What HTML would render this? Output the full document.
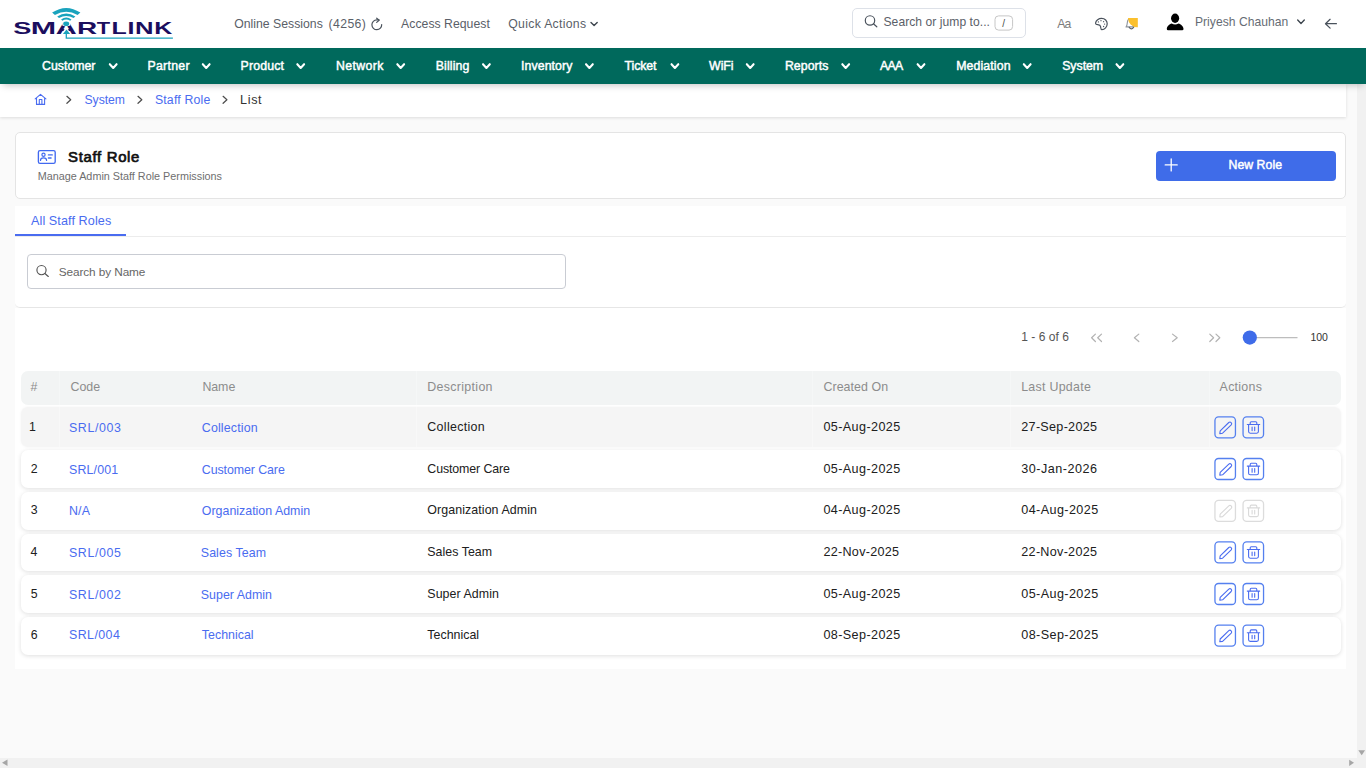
<!DOCTYPE html>
<html lang="en">
<head>
<meta charset="utf-8">
<title>Staff Role - List</title>
<style>
*{box-sizing:border-box;margin:0;padding:0}
html,body{width:1366px;height:768px;overflow:hidden;background:#fafafa;font-family:"Liberation Sans",Arial,sans-serif;color:#222}
body{position:relative}
.abs{position:absolute}
svg{overflow:visible}
.t{position:absolute;white-space:nowrap;line-height:1}
.sb{-webkit-text-stroke:.45px currentColor}
.sb2{-webkit-text-stroke:.7px currentColor}
#hdr{position:absolute;left:0;top:0;width:1366px;height:48px;background:#fff}
#nav{position:absolute;left:0;top:48px;width:1366px;height:36px;background:#00695c;box-shadow:0 4px 7px -3px rgba(0,0,0,.25)}
#bc{position:absolute;left:0;top:84px;width:1346px;height:33px;background:#fff;box-shadow:0 1px 3px rgba(0,0,0,.12)}
#vsb{position:absolute;left:1357px;top:84px;width:9px;height:684px;background:#f1f1f1}
#hsb{position:absolute;left:0;top:758px;width:1366px;height:10px;background:#f1f1f1}
#card{position:absolute;left:15px;top:132px;width:1331px;height:67px;background:#fff;border:1px solid #e4e4e4;border-radius:5px}
#btn{position:absolute;left:1156px;top:151px;width:180px;height:30px;background:#3f6ce9;border-radius:4px}
#tabs{position:absolute;left:15px;top:206px;width:1331px;height:31px;background:#fff;border-bottom:1px solid #ececec}
#tabline{position:absolute;left:15px;top:234px;width:111.4px;height:2px;background:#4a6cf0}
#srch{position:absolute;left:15px;top:237px;width:1331px;height:71px;background:#fff;border-bottom:1px solid #e6e6e6;border-radius:0 0 5px 5px}
#list{position:absolute;left:15px;top:308px;width:1331px;height:361px;background:#fff}
#inp{position:absolute;left:27px;top:254px;width:539px;height:35px;border:1px solid #c9ccd3;border-radius:4px;background:#fff}
#sbox{position:absolute;left:852px;top:8px;width:174px;height:30px;border:1px solid #dde1e8;border-radius:5px;background:#fff}
#th{position:absolute;left:21px;top:370.5px;width:1320px;height:34px;background:#f2f4f4;border-radius:7px}
.row{position:absolute;left:21px;width:1320px;background:#fff;border-radius:7px;box-shadow:0 1px 4px rgba(0,0,0,.13)}
.row.hov{background:#f5f5f5;box-shadow:0 0 3px rgba(0,0,0,.05)}
.seam{position:absolute;top:371px;width:1px;height:76px;background:rgba(255,255,255,.28)}
</style>
</head>
<body>
<div id="hdr"></div>
<svg id="logo" width="180" height="48" viewBox="0 0 180 48" style="position:absolute;left:0;top:0">
<text y="33.9" font-family="Liberation Sans, Arial, sans-serif" font-weight="700" font-size="16.3" fill="#1b0e5e"><tspan x="13.31" textLength="18.15" lengthAdjust="spacingAndGlyphs">S</tspan><tspan x="30.66" textLength="25.38" lengthAdjust="spacingAndGlyphs">M</tspan><tspan x="55.67" textLength="20.98" lengthAdjust="spacingAndGlyphs">A</tspan><tspan x="76.93" textLength="20.16" lengthAdjust="spacingAndGlyphs">R</tspan><tspan x="96.66" textLength="13.38" lengthAdjust="spacingAndGlyphs">T</tspan><tspan x="111.43" textLength="15.25" lengthAdjust="spacingAndGlyphs">L</tspan><tspan x="127.52" textLength="6.95" lengthAdjust="spacingAndGlyphs">I</tspan><tspan x="135.08" textLength="18.54" lengthAdjust="spacingAndGlyphs">N</tspan><tspan x="154.23" textLength="18.02" lengthAdjust="spacingAndGlyphs">K</tspan></text>
<path d="M61.5 33.95 L66.2 26.6 L70.9 33.95 Z" fill="#fff"/>
<path d="M62.3 22 h8 v3.6 l-4.1 1.2 l-3.9 -1.2 Z" fill="#fff"/>
<ellipse cx="66.2" cy="23.7" rx="3" ry="2.3" fill="#1aa3bd"/>
<path d="M62.9 33.9 L66.5 29.4 L70.2 33.9 Z" fill="#1aa3bd"/>
<path d="M66.3 33.5 V38.2 H172.9" fill="none" stroke="#1aa3bd" stroke-width="1.3"/>
<path d="M52.1 12.6 Q66.2 3.2 80.4 12.6 L77.6 15 Q66.2 8.6 54.9 15 Z" fill="#1aa3bd"/>
<path d="M57.2 16.4 Q66.2 10.4 75.4 16.4 L73.6 18.1 Q66.2 13.8 59 18.1 Z" fill="#1aa3bd"/>
<path d="M61.1 19.6 Q66.2 15.6 71.5 19.6 L70.2 20.8 Q66.2 18.2 62.4 20.8 Z" fill="#1aa3bd"/>
</svg>
<svg class="abs" style="left:370px;top:17px" width="14" height="14" viewBox="370 17 14 14"><path d="M381.7 24.6 A4.9 4.9 0 1 1 376.85 19.9 H379" fill="none" stroke="#4a525c" stroke-width="1.2" stroke-linecap="round"/><path d="M376.7 18.2 L379.1 20.2 L376.7 22.4" fill="none" stroke="#4a525c" stroke-width="1.2" stroke-linecap="round" stroke-linejoin="round"/></svg>
<svg class="abs" style="left:588px;top:19px" width="14" height="11" viewBox="588 19 14 11"><path d="M591.00 22.40 L594.10 25.50 L597.20 22.40" fill="none" stroke="#3e464f" stroke-width="1.4" stroke-linecap="round" stroke-linejoin="round"/></svg>
<div id="sbox"></div>
<svg class="abs" style="left:992px;top:13px" width="24" height="20" viewBox="992 13 24 20"><rect x="995" y="15.9" width="17.6" height="14.2" rx="3.6" fill="#fff" stroke="#c6c6c6" stroke-width="1"/></svg>
<svg class="abs" style="left:862px;top:13px" width="18" height="18" viewBox="862 13 18 18"><circle cx="870" cy="20.45" r="4.7" fill="none" stroke="#4a525c" stroke-width="1.2"/><path d="M873.4 23.8 L876.8 26.8" stroke="#4a525c" stroke-width="1.2" stroke-linecap="round"/></svg>
<svg class="abs" style="left:1093px;top:15px" width="18" height="18" viewBox="1093 14.7 18 18"><path d="M1101.6 18.1 C1105 18.1 1107.2 20.6 1107.2 23.4 C1107.2 26.6 1104.6 29.4 1102 29.4 C1100.6 29.4 1100.8 27.6 1100.6 26.4 C1100.4 25 1099.2 24.6 1097.8 24.4 C1096.4 24.2 1095.4 23.8 1095.6 22.6 C1096 20.2 1098.6 18.1 1101.6 18.1 Z" fill="none" stroke="#4a525c" stroke-width="1.2" stroke-linejoin="round"/><g fill="#4a525c"><circle cx="1098.4" cy="21.6" r=".65"/><circle cx="1101" cy="20.4" r=".65"/><circle cx="1103.6" cy="21.4" r=".65"/><circle cx="1104.6" cy="23.8" r=".65"/><circle cx="1103.6" cy="26.2" r=".65"/></g></svg>
<svg class="abs" style="left:1123px;top:15px" width="18" height="18" viewBox="1123 15 18 18"><path d="M1126 26.9 C1127.4 26 1127.2 22.4 1127.6 20.8 C1128 19.2 1129 18.6 1130 18.6 C1132 18.8 1132.4 20.4 1132.6 22 C1132.8 24 1132.8 26 1133.8 26.9 Z" fill="none" stroke="#8d949c" stroke-width="1.1" stroke-linejoin="round"/><path d="M1129.2 27.4 Q1131.4 30.2 1133.6 27.4" fill="none" stroke="#5a626b" stroke-width="1.2" stroke-linecap="round"/><path d="M1128 17.9 H1137.8 V27.3 H1137.2 A9.6 9.6 0 0 1 1128 17.9 Z" fill="#fbc02d"/></svg>
<svg class="abs" style="left:1165px;top:12px" width="20" height="20" viewBox="1165 12 20 20"><ellipse cx="1175.1" cy="18.2" rx="4.05" ry="4.7" fill="#000"/><path d="M1166.8 29 C1166.8 26 1169.5 24.2 1171.7 23.5 A6.4 6.4 0 0 0 1178.5 23.5 C1180.7 24.2 1183.5 26 1183.5 29 Q1183.5 30.3 1182.2 30.3 H1168.1 Q1166.8 30.3 1166.8 29 Z" fill="#000"/></svg>
<svg class="abs" style="left:1294px;top:17px" width="14" height="11" viewBox="1294 17 14 11"><path d="M1297.70 20.10 L1301.00 23.40 L1304.30 20.10" fill="none" stroke="#3e464f" stroke-width="1.4" stroke-linecap="round" stroke-linejoin="round"/></svg>
<svg class="abs" style="left:1322px;top:16px" width="18" height="16" viewBox="1322 16 18 16"><path d="M1336.4 23.7 H1325.6 M1330.1 19.3 L1325.5 23.7 L1330.1 28.1" fill="none" stroke="#4a525c" stroke-width="1.25" stroke-linecap="round" stroke-linejoin="round"/></svg>
<div id="bc"></div>
<div id="vsb"></div><div id="hsb"></div>
<svg class="abs" style="left:0;top:748px" width="1366" height="20" viewBox="0 748 1366 20"><g fill="#a6a6a6"><path d="M2 762.8 L7.5 759.5 V766.1 Z"/><path d="M1354 762.8 L1349.2 759.7 V765.9 Z"/><path d="M1358.3 750.3 H1365.1 L1361.7 755.3 Z"/></g></svg>
<div id="nav"></div>
<svg class="abs" style="left:106px;top:61px" width="14" height="11" viewBox="106 61 14 11"><path d="M109.80 64.20 L113.20 68.00 L116.60 64.20" fill="none" stroke="#fff" stroke-width="2.05" stroke-linecap="round" stroke-linejoin="round"/></svg>
<svg class="abs" style="left:199px;top:61px" width="14" height="11" viewBox="199 61 14 11"><path d="M202.80 64.20 L206.20 68.00 L209.60 64.20" fill="none" stroke="#fff" stroke-width="2.05" stroke-linecap="round" stroke-linejoin="round"/></svg>
<svg class="abs" style="left:294px;top:61px" width="14" height="11" viewBox="294 61 14 11"><path d="M297.30 64.20 L300.70 68.00 L304.10 64.20" fill="none" stroke="#fff" stroke-width="2.05" stroke-linecap="round" stroke-linejoin="round"/></svg>
<svg class="abs" style="left:394px;top:61px" width="14" height="11" viewBox="394 61 14 11"><path d="M397.30 64.20 L400.70 68.00 L404.10 64.20" fill="none" stroke="#fff" stroke-width="2.05" stroke-linecap="round" stroke-linejoin="round"/></svg>
<svg class="abs" style="left:480px;top:61px" width="14" height="11" viewBox="480 61 14 11"><path d="M483.00 64.20 L486.40 68.00 L489.80 64.20" fill="none" stroke="#fff" stroke-width="2.05" stroke-linecap="round" stroke-linejoin="round"/></svg>
<svg class="abs" style="left:583px;top:61px" width="14" height="11" viewBox="583 61 14 11"><path d="M586.00 64.20 L589.40 68.00 L592.80 64.20" fill="none" stroke="#fff" stroke-width="2.05" stroke-linecap="round" stroke-linejoin="round"/></svg>
<svg class="abs" style="left:668px;top:61px" width="14" height="11" viewBox="668 61 14 11"><path d="M671.50 64.20 L674.90 68.00 L678.30 64.20" fill="none" stroke="#fff" stroke-width="2.05" stroke-linecap="round" stroke-linejoin="round"/></svg>
<svg class="abs" style="left:743px;top:61px" width="14" height="11" viewBox="743 61 14 11"><path d="M746.80 64.20 L750.20 68.00 L753.60 64.20" fill="none" stroke="#fff" stroke-width="2.05" stroke-linecap="round" stroke-linejoin="round"/></svg>
<svg class="abs" style="left:839px;top:61px" width="14" height="11" viewBox="839 61 14 11"><path d="M842.30 64.20 L845.70 68.00 L849.10 64.20" fill="none" stroke="#fff" stroke-width="2.05" stroke-linecap="round" stroke-linejoin="round"/></svg>
<svg class="abs" style="left:914px;top:61px" width="14" height="11" viewBox="914 61 14 11"><path d="M917.60 64.20 L921.00 68.00 L924.40 64.20" fill="none" stroke="#fff" stroke-width="2.05" stroke-linecap="round" stroke-linejoin="round"/></svg>
<svg class="abs" style="left:1020px;top:61px" width="14" height="11" viewBox="1020 61 14 11"><path d="M1023.80 64.20 L1027.20 68.00 L1030.60 64.20" fill="none" stroke="#fff" stroke-width="2.05" stroke-linecap="round" stroke-linejoin="round"/></svg>
<svg class="abs" style="left:1113px;top:61px" width="14" height="11" viewBox="1113 61 14 11"><path d="M1116.50 64.20 L1119.90 68.00 L1123.30 64.20" fill="none" stroke="#fff" stroke-width="2.05" stroke-linecap="round" stroke-linejoin="round"/></svg>
<svg class="abs" style="left:33px;top:92px" width="16" height="15" viewBox="33 92 16 15"><path d="M35.2 98.8 L40.5 94.3 L45.9 98.8 M36.5 97.9 V104.4 H44.6 V97.9 M39.3 104.4 V99.5 H41.9 V104.4" fill="none" stroke="#4a6cf0" stroke-width="1.1" stroke-linecap="round" stroke-linejoin="round"/></svg>
<svg class="abs" style="left:60px;top:92px" width="180" height="16" viewBox="60 92 180 16"><g fill="none" stroke="#4d4d4d" stroke-width="1.25" stroke-linecap="round" stroke-linejoin="round"><path d="M66.9 96.3 L70.7 99.8 L66.9 103.3"/><path d="M138 96.3 L141.8 99.8 L138 103.3"/><path d="M223.1 96.3 L226.9 99.8 L223.1 103.3"/></g></svg>
<div id="card"></div><div id="btn"></div>
<svg class="abs" style="left:1164px;top:158px" width="14" height="14" viewBox="1164 158 14 14"><path d="M1165.2 164.9 H1177.2 M1171.2 158.9 V170.9" stroke="#fff" stroke-width="1.3" stroke-linecap="round"/></svg>
<svg class="abs" style="left:36px;top:148px" width="22" height="18" viewBox="36 148 22 18"><rect x="38.4" y="150.6" width="16.8" height="12.7" rx="1.6" fill="none" stroke="#4169f0" stroke-width="1.35"/><circle cx="43.5" cy="154.8" r="1.6" fill="none" stroke="#4169f0" stroke-width="1.2"/><path d="M40.5 160.4 C40.5 158.4 41.6 157.9 43.5 157.9 C45.4 157.9 46.6 158.4 46.6 160.4" fill="none" stroke="#4169f0" stroke-width="1.2" stroke-linecap="round"/><path d="M48.4 154.9 H52.3 M48.4 158 H51.1" stroke="#4169f0" stroke-width="1.3" stroke-linecap="round"/></svg>
<div id="tabs"></div><div id="tabline"></div><div id="srch"></div><div id="list"></div><div id="inp"></div>
<svg class="abs" style="left:34px;top:263px" width="18" height="18" viewBox="34 263 18 18"><circle cx="41.5" cy="270.1" r="4.6" fill="none" stroke="#555" stroke-width="1.15"/><path d="M44.9 273.5 L48.3 276.5" stroke="#555" stroke-width="1.15" stroke-linecap="round"/></svg>
<svg class="abs" style="left:1085px;top:328px" width="220" height="20" viewBox="1085 328 220 20"><g fill="none" stroke="#b2b2b2" stroke-width="1.2" stroke-linecap="round" stroke-linejoin="round"><path d="M1095.4 334.1 L1091.6 337.8 L1095.4 341.5 M1101.5 334.1 L1097.7 337.8 L1101.5 341.5"/><path d="M1138.8 334.1 L1134.4 337.8 L1138.8 341.5"/><path d="M1172.5 334.1 L1177.2 337.8 L1172.5 341.5"/><path d="M1209.8 334.1 L1213.6 337.8 L1209.8 341.5 M1216 334.1 L1219.8 337.8 L1216 341.5"/></g><path d="M1252 337.6 H1297.5" stroke="#bdbdbd" stroke-width="1.4"/><circle cx="1249.8" cy="337.6" r="7.1" fill="#3f6ce9"/></svg>
<div id="th"></div>
<div class="row hov" style="top:407px;height:40px"></div>
<div class="row" style="top:450px;height:38px"></div>
<div class="row" style="top:492px;height:37.6px"></div>
<div class="row" style="top:533.6px;height:37.8px"></div>
<div class="row" style="top:575.2px;height:37.7px"></div>
<div class="row" style="top:617px;height:37.5px"></div>
<div class="seam" style="left:59px"></div>
<div class="seam" style="left:416px"></div>
<div class="seam" style="left:812px"></div>
<div class="seam" style="left:1010px"></div>
<div class="seam" style="left:1209px"></div>
<svg class="abs" style="left:1214px;top:415px" width="52" height="26" viewBox="1214 415.00 52 26"><g fill="none" stroke="#5580ef" stroke-width="1.3"><rect x="1214.95" y="416.9" width="20.5" height="21" rx="3.6"/><rect x="1243.05" y="416.9" width="20.5" height="21" rx="3.6"/></g><g fill="none" stroke="#4a6cf0" stroke-width="1.1" stroke-linejoin="round" stroke-linecap="round"><path d="M1219.8 433.6 L1220.2 430.8 L1228.8 422.5 A1.7 1.7 0 0 1 1231.2 424.9 L1222.6 433.2 Z"/><path d="M1247.3 424.5 H1259.7 M1250.2 424.3 V422.8 Q1250.2 421.7 1251.3 421.7 H1255.7 Q1256.8 421.7 1256.8 422.8 V424.3 M1248.6 424.7 V431.6 Q1248.6 433.2 1250.2 433.2 H1256.8 Q1258.4 433.2 1258.4 431.6 V424.7 M1252.1 427 V430.6 M1254.7 427 V430.6"/></g></svg>
<svg class="abs" style="left:1214px;top:457px" width="52" height="26" viewBox="1214 415.40 52 26"><g fill="none" stroke="#5580ef" stroke-width="1.3"><rect x="1214.95" y="416.9" width="20.5" height="21" rx="3.6"/><rect x="1243.05" y="416.9" width="20.5" height="21" rx="3.6"/></g><g fill="none" stroke="#4a6cf0" stroke-width="1.1" stroke-linejoin="round" stroke-linecap="round"><path d="M1219.8 433.6 L1220.2 430.8 L1228.8 422.5 A1.7 1.7 0 0 1 1231.2 424.9 L1222.6 433.2 Z"/><path d="M1247.3 424.5 H1259.7 M1250.2 424.3 V422.8 Q1250.2 421.7 1251.3 421.7 H1255.7 Q1256.8 421.7 1256.8 422.8 V424.3 M1248.6 424.7 V431.6 Q1248.6 433.2 1250.2 433.2 H1256.8 Q1258.4 433.2 1258.4 431.6 V424.7 M1252.1 427 V430.6 M1254.7 427 V430.6"/></g></svg>
<svg class="abs" style="left:1214px;top:498px" width="52" height="26" viewBox="1214 414.60 52 26"><g fill="none" stroke="#dcdcdc" stroke-width="1.3"><rect x="1214.95" y="416.9" width="20.5" height="21" rx="3.6"/><rect x="1243.05" y="416.9" width="20.5" height="21" rx="3.6"/></g><g fill="none" stroke="#d9d9d9" stroke-width="1.1" stroke-linejoin="round" stroke-linecap="round"><path d="M1219.8 433.6 L1220.2 430.8 L1228.8 422.5 A1.7 1.7 0 0 1 1231.2 424.9 L1222.6 433.2 Z"/><path d="M1247.3 424.5 H1259.7 M1250.2 424.3 V422.8 Q1250.2 421.7 1251.3 421.7 H1255.7 Q1256.8 421.7 1256.8 422.8 V424.3 M1248.6 424.7 V431.6 Q1248.6 433.2 1250.2 433.2 H1256.8 Q1258.4 433.2 1258.4 431.6 V424.7 M1252.1 427 V430.6 M1254.7 427 V430.6"/></g></svg>
<svg class="abs" style="left:1214px;top:540px" width="52" height="26" viewBox="1214 415.00 52 26"><g fill="none" stroke="#5580ef" stroke-width="1.3"><rect x="1214.95" y="416.9" width="20.5" height="21" rx="3.6"/><rect x="1243.05" y="416.9" width="20.5" height="21" rx="3.6"/></g><g fill="none" stroke="#4a6cf0" stroke-width="1.1" stroke-linejoin="round" stroke-linecap="round"><path d="M1219.8 433.6 L1220.2 430.8 L1228.8 422.5 A1.7 1.7 0 0 1 1231.2 424.9 L1222.6 433.2 Z"/><path d="M1247.3 424.5 H1259.7 M1250.2 424.3 V422.8 Q1250.2 421.7 1251.3 421.7 H1255.7 Q1256.8 421.7 1256.8 422.8 V424.3 M1248.6 424.7 V431.6 Q1248.6 433.2 1250.2 433.2 H1256.8 Q1258.4 433.2 1258.4 431.6 V424.7 M1252.1 427 V430.6 M1254.7 427 V430.6"/></g></svg>
<svg class="abs" style="left:1214px;top:582px" width="52" height="26" viewBox="1214 415.40 52 26"><g fill="none" stroke="#5580ef" stroke-width="1.3"><rect x="1214.95" y="416.9" width="20.5" height="21" rx="3.6"/><rect x="1243.05" y="416.9" width="20.5" height="21" rx="3.6"/></g><g fill="none" stroke="#4a6cf0" stroke-width="1.1" stroke-linejoin="round" stroke-linecap="round"><path d="M1219.8 433.6 L1220.2 430.8 L1228.8 422.5 A1.7 1.7 0 0 1 1231.2 424.9 L1222.6 433.2 Z"/><path d="M1247.3 424.5 H1259.7 M1250.2 424.3 V422.8 Q1250.2 421.7 1251.3 421.7 H1255.7 Q1256.8 421.7 1256.8 422.8 V424.3 M1248.6 424.7 V431.6 Q1248.6 433.2 1250.2 433.2 H1256.8 Q1258.4 433.2 1258.4 431.6 V424.7 M1252.1 427 V430.6 M1254.7 427 V430.6"/></g></svg>
<svg class="abs" style="left:1214px;top:623px" width="52" height="26" viewBox="1214 414.80 52 26"><g fill="none" stroke="#5580ef" stroke-width="1.3"><rect x="1214.95" y="416.9" width="20.5" height="21" rx="3.6"/><rect x="1243.05" y="416.9" width="20.5" height="21" rx="3.6"/></g><g fill="none" stroke="#4a6cf0" stroke-width="1.1" stroke-linejoin="round" stroke-linecap="round"><path d="M1219.8 433.6 L1220.2 430.8 L1228.8 422.5 A1.7 1.7 0 0 1 1231.2 424.9 L1222.6 433.2 Z"/><path d="M1247.3 424.5 H1259.7 M1250.2 424.3 V422.8 Q1250.2 421.7 1251.3 421.7 H1255.7 Q1256.8 421.7 1256.8 422.8 V424.3 M1248.6 424.7 V431.6 Q1248.6 433.2 1250.2 433.2 H1256.8 Q1258.4 433.2 1258.4 431.6 V424.7 M1252.1 427 V430.6 M1254.7 427 V430.6"/></g></svg>
<span class="t" style="left:234.2px;top:17.6px;font-size:12.25px;color:#5a6068;letter-spacing:0.005px">Online Sessions</span>
<span class="t" style="left:328.5px;top:17.6px;font-size:12.25px;color:#5a6068;letter-spacing:0.396px">(4256)</span>
<span class="t" style="left:401.1px;top:17.6px;font-size:12.25px;color:#5a6068;letter-spacing:0.014px">Access Request</span>
<span class="t" style="left:508.3px;top:17.6px;font-size:12.25px;color:#5a6068;letter-spacing:0.298px">Quick Actions</span>
<span class="t" style="left:883.5px;top:15.8px;font-size:12.1px;color:#5a6068;letter-spacing:0.046px">Search or jump to...</span>
<span class="t" style="left:1002.3px;top:19.1px;font-size:10px;color:#4a4a4a">/</span>
<span class="t" style="left:1057.3px;top:17.8px;font-size:12.2px;color:#7d7d7d;letter-spacing:-0.822px">Aa</span>
<span class="t" style="left:1194.9px;top:15.6px;font-size:12.1px;color:#666c74;letter-spacing:0.044px">Priyesh Chauhan</span>
<span class="t sb" style="left:42.1px;top:59.6px;font-size:12.3px;color:#fff">Customer</span>
<span class="t sb" style="left:147.5px;top:59.6px;font-size:12.3px;color:#fff;letter-spacing:0.279px">Partner</span>
<span class="t sb" style="left:240.5px;top:59.6px;font-size:12.3px;color:#fff;letter-spacing:0.185px">Product</span>
<span class="t sb" style="left:336.1px;top:59.6px;font-size:12.3px;color:#fff;letter-spacing:0.365px">Network</span>
<span class="t sb" style="left:435.7px;top:59.6px;font-size:12.3px;color:#fff;letter-spacing:0.148px">Billing</span>
<span class="t sb" style="left:521.1px;top:59.6px;font-size:12.3px;color:#fff;letter-spacing:0.076px">Inventory</span>
<span class="t sb" style="left:624.6px;top:59.6px;font-size:12.3px;color:#fff;letter-spacing:-0.109px">Ticket</span>
<span class="t sb" style="left:709.1px;top:59.6px;font-size:12.3px;color:#fff;letter-spacing:-0.065px">WiFi</span>
<span class="t sb" style="left:784.9px;top:59.6px;font-size:12.3px;color:#fff;letter-spacing:0.073px">Reports</span>
<span class="t sb" style="left:880.1px;top:59.6px;font-size:12.3px;color:#fff;letter-spacing:-0.805px">AAA</span>
<span class="t sb" style="left:956.2px;top:59.6px;font-size:12.3px;color:#fff;letter-spacing:0.121px">Mediation</span>
<span class="t sb" style="left:1062.2px;top:59.6px;font-size:12.3px;color:#fff;letter-spacing:-0.020px">System</span>
<span class="t" style="left:84.5px;top:93.7px;font-size:12.2px;color:#4a6cf0;letter-spacing:-0.048px">System</span>
<span class="t" style="left:154.9px;top:93.6px;font-size:12.3px;color:#4a6cf0;letter-spacing:0.180px">Staff Role</span>
<span class="t" style="left:240.0px;top:94.3px;font-size:12.6px;color:#333;letter-spacing:0.664px">List</span>
<span class="t sb2" style="left:68.0px;top:150.4px;font-size:14.9px;color:#111;letter-spacing:0.697px">Staff Role</span>
<span class="t" style="left:37.7px;top:170.9px;font-size:10.8px;color:#6e6e6e;letter-spacing:0.007px">Manage Admin Staff Role Permissions</span>
<span class="t sb" style="left:1228.5px;top:158.8px;font-size:12.3px;color:#fff;letter-spacing:0.027px">New Role</span>
<span class="t" style="left:31.0px;top:214.5px;font-size:12.6px;color:#4a6cf0;letter-spacing:0.095px">All Staff Roles</span>
<span class="t" style="left:58.8px;top:266.8px;font-size:11.8px;color:#666;letter-spacing:-0.098px">Search by Name</span>
<span class="t" style="left:1021.2px;top:330.9px;font-size:12px;color:#555;letter-spacing:0.047px">1 - 6 of 6</span>
<span class="t" style="left:1310.4px;top:332.2px;font-size:10.5px;color:#333;letter-spacing:-0.066px">100</span>
<span class="t" style="left:30.4px;top:380.5px;font-size:12.4px;color:#8c8c8c">#</span>
<span class="t" style="left:70.5px;top:380.5px;font-size:12.4px;color:#8c8c8c;letter-spacing:-0.008px">Code</span>
<span class="t" style="left:202.4px;top:380.5px;font-size:12.4px;color:#8c8c8c;letter-spacing:-0.054px">Name</span>
<span class="t" style="left:427.3px;top:380.5px;font-size:12.4px;color:#8c8c8c;letter-spacing:0.322px">Description</span>
<span class="t" style="left:823.4px;top:380.5px;font-size:12.4px;color:#8c8c8c;letter-spacing:0.082px">Created On</span>
<span class="t" style="left:1021.2px;top:380.5px;font-size:12.4px;color:#8c8c8c;letter-spacing:0.277px">Last Update</span>
<span class="t" style="left:1219.6px;top:380.5px;font-size:12.4px;color:#8c8c8c;letter-spacing:0.277px">Actions</span>
<span class="t" style="left:29.0px;top:420.6px;font-size:12.3px;color:#202020">1</span>
<span class="t" style="left:69.0px;top:421.5px;font-size:12.4px;color:#4a6cf0;letter-spacing:0.594px">SRL/003</span>
<span class="t" style="left:201.8px;top:421.5px;font-size:12.4px;color:#4a6cf0;letter-spacing:0.153px">Collection</span>
<span class="t" style="left:427.3px;top:420.5px;font-size:12.4px;color:#202020;letter-spacing:0.331px">Collection</span>
<span class="t" style="left:823.4px;top:421.3px;font-size:12.6px;color:#202020;letter-spacing:0.407px">05-Aug-2025</span>
<span class="t" style="left:1021.3px;top:421.3px;font-size:12.6px;color:#202020;letter-spacing:0.287px">27-Sep-2025</span>
<span class="t" style="left:30.7px;top:462.6px;font-size:12.3px;color:#202020">2</span>
<span class="t" style="left:69.0px;top:463.5px;font-size:12.4px;color:#4a6cf0;letter-spacing:0.161px">SRL/001</span>
<span class="t" style="left:201.8px;top:463.5px;font-size:12.4px;color:#4a6cf0;letter-spacing:-0.085px">Customer Care</span>
<span class="t" style="left:427.3px;top:462.5px;font-size:12.4px;color:#202020;letter-spacing:-0.118px">Customer Care</span>
<span class="t" style="left:823.4px;top:463.3px;font-size:12.6px;color:#202020;letter-spacing:0.407px">05-Aug-2025</span>
<span class="t" style="left:1021.3px;top:463.3px;font-size:12.6px;color:#202020;letter-spacing:0.498px">30-Jan-2026</span>
<span class="t" style="left:30.7px;top:503.6px;font-size:12.3px;color:#202020">3</span>
<span class="t" style="left:69.0px;top:504.5px;font-size:12.4px;color:#4a6cf0;letter-spacing:0.122px">N/A</span>
<span class="t" style="left:201.8px;top:504.5px;font-size:12.4px;color:#4a6cf0;letter-spacing:0.009px">Organization Admin</span>
<span class="t" style="left:427.3px;top:503.5px;font-size:12.4px;color:#202020;letter-spacing:0.086px">Organization Admin</span>
<span class="t" style="left:823.4px;top:504.3px;font-size:12.6px;color:#202020;letter-spacing:0.407px">04-Aug-2025</span>
<span class="t" style="left:1021.3px;top:504.3px;font-size:12.6px;color:#202020;letter-spacing:0.407px">04-Aug-2025</span>
<span class="t" style="left:30.5px;top:545.6px;font-size:12.3px;color:#202020">4</span>
<span class="t" style="left:69.0px;top:546.5px;font-size:12.4px;color:#4a6cf0;letter-spacing:0.594px">SRL/005</span>
<span class="t" style="left:200.8px;top:546.5px;font-size:12.4px;color:#4a6cf0;letter-spacing:0.076px">Sales Team</span>
<span class="t" style="left:427.3px;top:545.5px;font-size:12.4px;color:#202020;letter-spacing:0.032px">Sales Team</span>
<span class="t" style="left:823.4px;top:546.3px;font-size:12.6px;color:#202020;letter-spacing:0.289px">22-Nov-2025</span>
<span class="t" style="left:1021.3px;top:546.3px;font-size:12.6px;color:#202020;letter-spacing:0.289px">22-Nov-2025</span>
<span class="t" style="left:30.7px;top:587.6px;font-size:12.3px;color:#202020">5</span>
<span class="t" style="left:69.0px;top:588.5px;font-size:12.4px;color:#4a6cf0;letter-spacing:0.594px">SRL/002</span>
<span class="t" style="left:200.8px;top:588.5px;font-size:12.4px;color:#4a6cf0;letter-spacing:0.025px">Super Admin</span>
<span class="t" style="left:427.3px;top:587.5px;font-size:12.4px;color:#202020;letter-spacing:0.065px">Super Admin</span>
<span class="t" style="left:823.4px;top:588.3px;font-size:12.6px;color:#202020;letter-spacing:0.407px">05-Aug-2025</span>
<span class="t" style="left:1021.3px;top:588.3px;font-size:12.6px;color:#202020;letter-spacing:0.407px">05-Aug-2025</span>
<span class="t" style="left:30.7px;top:628.6px;font-size:12.3px;color:#202020">6</span>
<span class="t" style="left:69.0px;top:628.5px;font-size:12.4px;color:#4a6cf0;letter-spacing:0.428px">SRL/004</span>
<span class="t" style="left:201.8px;top:628.5px;font-size:12.4px;color:#4a6cf0;letter-spacing:0.018px">Technical</span>
<span class="t" style="left:427.3px;top:628.5px;font-size:12.4px;color:#202020;letter-spacing:0.018px">Technical</span>
<span class="t" style="left:823.4px;top:629.3px;font-size:12.6px;color:#202020;letter-spacing:0.407px">08-Sep-2025</span>
<span class="t" style="left:1021.3px;top:629.3px;font-size:12.6px;color:#202020;letter-spacing:0.407px">08-Sep-2025</span>
</body>
</html>
